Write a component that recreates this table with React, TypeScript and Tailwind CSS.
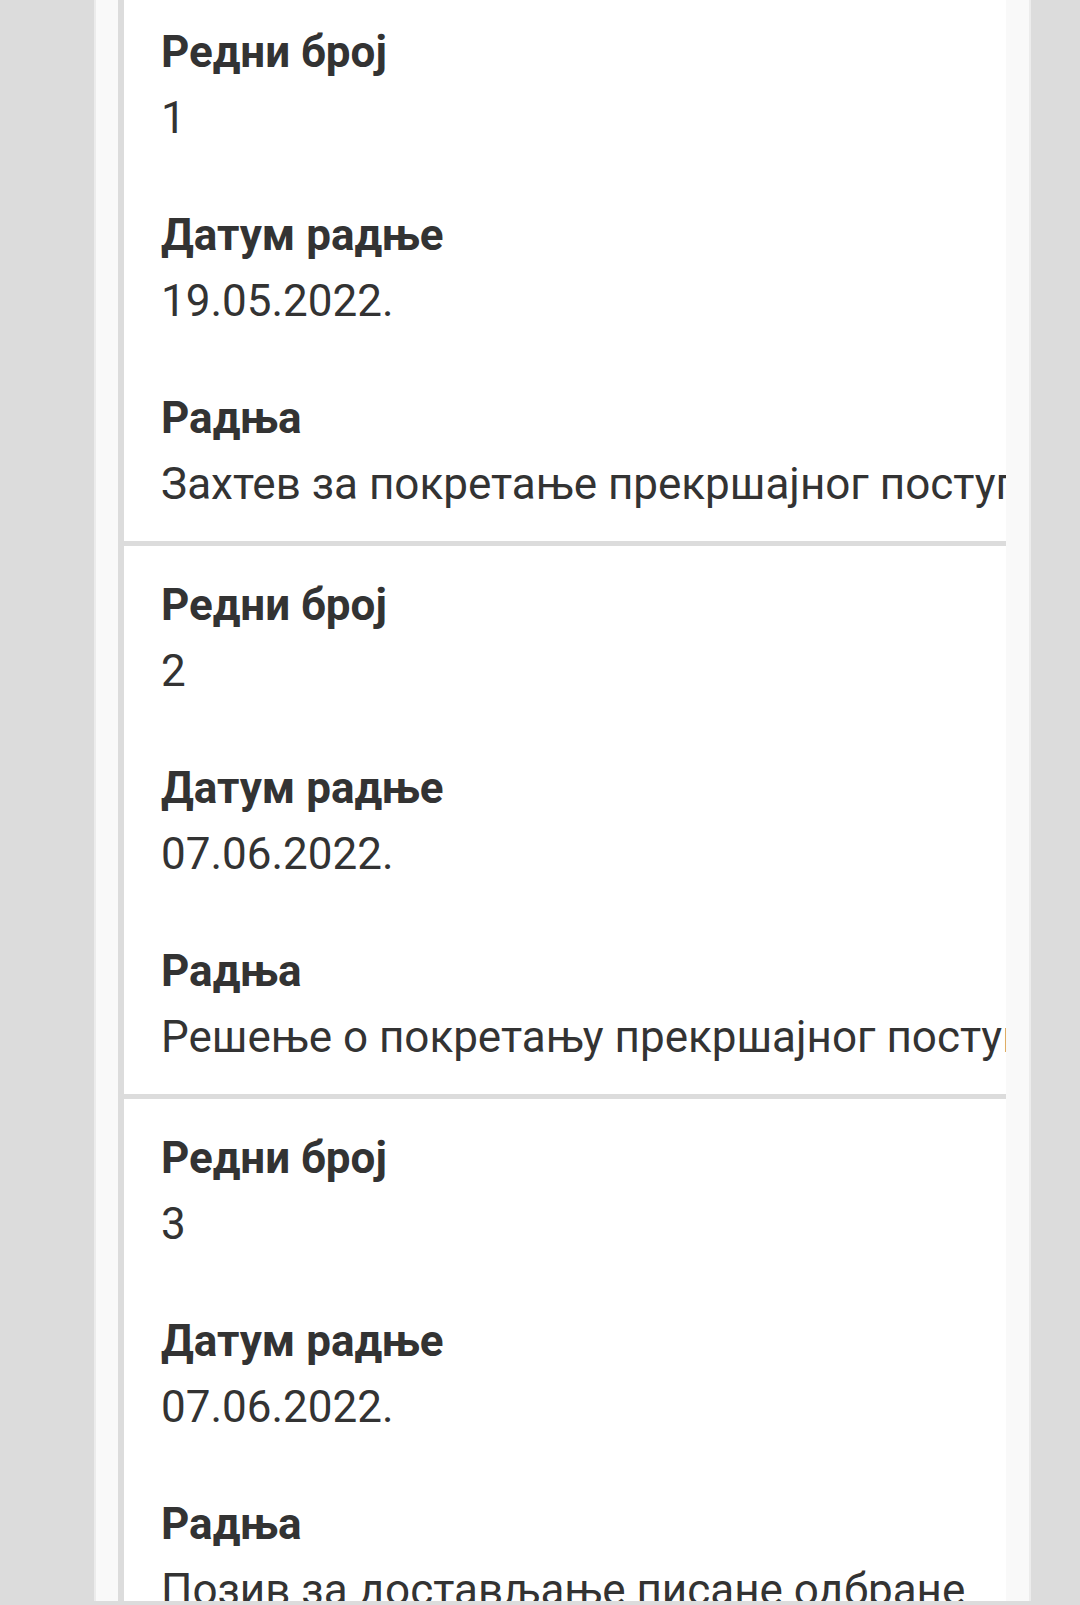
const rows = [
  { no: "1", date: "19.05.2022.", action: "Захтев за покретање прекршајног поступка" },
  { no: "2", date: "07.06.2022.", action: "Решење о покретању прекршајног поступка" },
  { no: "3", date: "07.06.2022.", action: "Позив за достављање писане одбране" },
];

function Field({ label, value }: { label: string; value: string }) {
  return (
    <div className="flex flex-col">
      <div className="text-[44px] leading-[66px] font-bold text-[#333333] whitespace-nowrap">{label}</div>
      <div className="text-[44px] leading-[66px] text-[#333333] whitespace-nowrap overflow-hidden">{value}</div>
    </div>
  );
}

export default function App() {
  return (
    <div
      className="w-[1080px] h-[1605px] flex flex-col bg-[#dcdcdc] overflow-hidden"
      style={{ fontFamily: "Roboto, 'Noto Sans', sans-serif" }}
    >
      <div className="flex-1 min-h-0 overflow-hidden">
        <div className="ml-[94px] w-[937px] h-full bg-[#f9f9f9] border-x-2 border-[#ececec] pl-[22px] pr-[23px]">
          <div className="h-full border-l-[6px] border-[#dcdcdc] bg-white overflow-hidden">
            {rows.map((r, i) => (
              <div
                key={r.no}
                className={
                  i === 0
                    ? "flex flex-col gap-[51px] pl-[37px] pt-[19px] pb-[24px] border-b-[5px] border-[#dcdcdc]"
                    : "flex flex-col gap-[51px] pl-[37px] pt-[26px] pb-[24px] border-b-[5px] border-[#dcdcdc]"
                }
              >
                <Field label="Редни број" value={r.no} />
                <Field label="Датум радње" value={r.date} />
                <Field label="Радња" value={r.action} />
              </div>
            ))}
          </div>
        </div>
      </div>
      <div className="h-[4px] bg-[#dcdcdc]" />
    </div>
  );
}
